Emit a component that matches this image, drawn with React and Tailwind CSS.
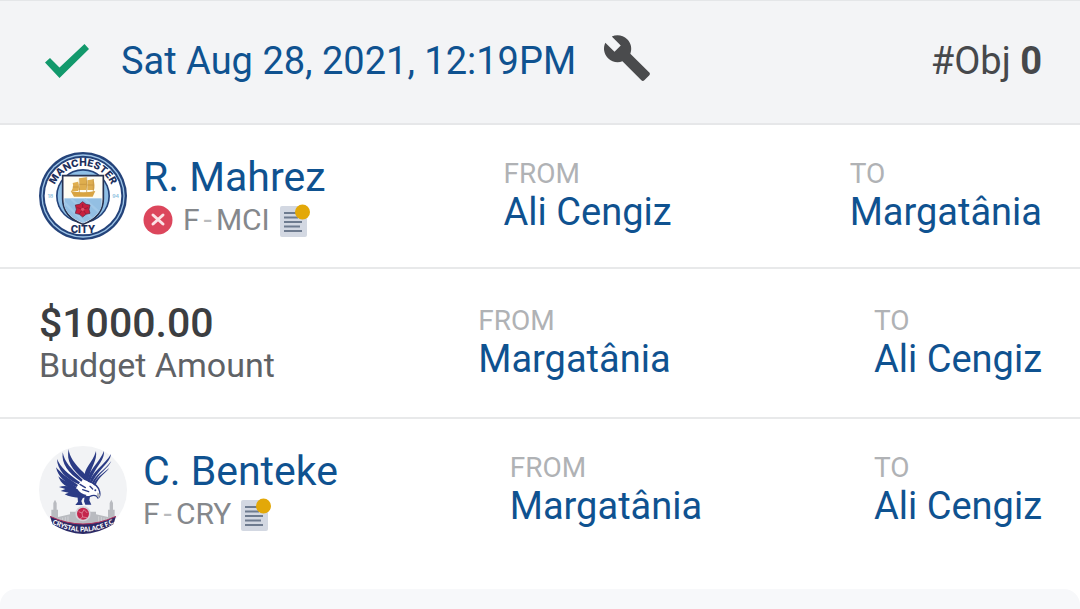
import React from 'react';
import { MdBuild } from 'react-icons/md';

const CityCrest = () => (
  <svg viewBox="27 35 264 264" className="w-[88px] h-[88px] shrink-0" role="img" aria-label="Manchester City">
    <defs>
      <path id="cityTop" d="M68 168a91 91 0 0 1 182 0" />
      <clipPath id="cityShield">
        <path d="M100 108h118v68c0 36-22 58-59 72c-37-14-59-36-59-72z" />
      </clipPath>
    </defs>
    <circle cx="159" cy="167" r="132" fill="#24437a" />
    <circle cx="159" cy="167" r="125" fill="#9ec5e8" />
    <circle cx="159" cy="167" r="121" fill="#24437a" />
    <circle cx="159" cy="167" r="115" fill="#fff" />
    <circle cx="159" cy="167" r="81" fill="#24437a" />
    <circle cx="159" cy="167" r="76" fill="#8fbfe6" />
    <path d="M98 106h122v70c0 38-24 62-61 76c-37-14-61-38-61-76z" fill="#fff" stroke="#28324f" strokeWidth="5" />
    <g clipPath="url(#cityShield)">
      <rect x="103" y="111" width="112" height="63" fill="#fffdf2" />
      <rect x="103" y="174" width="112" height="80" fill="#93bfe3" />
      <path d="M103 186l60 60M124 176l70 66M164 176l44 40" stroke="#a0c8e8" strokeWidth="7" />
    </g>
    <path d="M122 152q38 8 74 0l-8 17h-56z" fill="#d9a441" />
    <path d="M128 128l16-4q6 16 0 28h-20q8-12 4-24zM148 114l20-3q6 20 0 38h-22q7-16 2-35zM172 120l18-3q6 18 2 32h-20z" fill="#dfae4e" />
    <path d="M148 114v42M170 110v46M190 116v38M148 132h20M172 134h18M128 140h16" stroke="#c08f3c" strokeWidth="2" />
    <path d="M158 184l10 8 12 2-3 13 3 12-12 3-10 8-10-8-12-3 3-12-3-13 12-2z" fill="#c8203f" stroke="#5b2340" strokeWidth="2" />
    <path d="M158 207v-16M158 207l16-5M158 207l10 14M158 207l-10 14M158 207l-16-5" stroke="#7a1c38" strokeWidth="2" />
    <circle cx="158" cy="207" r="5" fill="#e2556c" />
    <text fontFamily="Inter, sans-serif" fontWeight="800" fontSize="30" fill="#1d2f5c" textAnchor="middle">
      <textPath href="#cityTop" startOffset="50%">MANCHESTER</textPath>
    </text>
    <text x="159" y="277" fontFamily="Inter, sans-serif" fontWeight="800" fontSize="30" fill="#1d2f5c" textAnchor="middle">CITY</text>
    <text x="61" y="173" fontFamily="Inter, sans-serif" fontWeight="600" fontSize="16" fill="#8fbfe0" textAnchor="middle">18</text>
    <text x="257" y="173" fontFamily="Inter, sans-serif" fontWeight="600" fontSize="16" fill="#8fbfe0" textAnchor="middle">94</text>
  </svg>
);

const PalaceCrest = () => (
  <svg viewBox="27 33 264 264" className="w-[88px] h-[88px] shrink-0" role="img" aria-label="Crystal Palace">
    <defs>
      <path id="palaceRibbon" d="M62 263Q159 317 256 263" />
    </defs>
    <circle cx="159" cy="165" r="132" fill="#f2f3f5" />
    {/* palace */}
    <path d="M70 204l5-10 5 10v50H70zM239 204l5-10 5 10v50h-10zM64 224h20v36H64zM234 224h20v36h-20zM84 246l36-8v-8h78v8l36 8v20H84z" fill="#b9bbc0" />
    <path d="M90 250v10M98 248v14M106 246v16M114 244v20M206 244v20M214 246v16M222 248v14M230 250v10" stroke="#dcdde0" strokeWidth="2" />
    {/* eagle */}
    <path d="M108 84C124 104 146 116 176 140C192 144 206 156 209 170C211 180 209 186 204 189C200 181 194 180 186 182C174 188 160 186 150 180C132 170 112 140 102 110Z" fill="#fff" />
    <path d="M116 42C118 66 134 86 160 112C168 120 172 130 176 140L162 134C126 104 108 78 116 42Z" fill="#2b3b85" />
    <path d="M98 52C104 82 122 100 158 134L154 140C114 114 94 86 98 52Z" fill="#2b3b85" />
    <path d="M81 72C92 98 112 114 150 142L146 148C106 130 82 104 81 72Z" fill="#2b3b85" />
    <path d="M78 97C92 114 112 128 144 150L140 156C106 144 84 126 78 97Z" fill="#2b3b85" />
    <path d="M85 124C98 136 116 142 140 156L136 164C110 158 92 146 85 124Z" fill="#2b3b85" />
    <path d="M87 156C104 150 124 154 142 162C148 172 158 178 170 180L162 188C142 190 118 186 104 178L116 173L92 168L106 162Z" fill="#2b3b85" />
    <path d="M198 48C202 78 184 92 174 136L164 128C160 100 188 84 198 48Z" fill="#2b3b85" />
    <path d="M222 48C224 78 196 94 180 140L173 137C174 106 208 84 222 48Z" fill="#2b3b85" />
    <path d="M243 57C240 86 206 100 186 144L179 141C186 110 224 90 243 57Z" fill="#2b3b85" />
    <path d="M244 78C234 102 208 110 191 148L186 145C194 120 224 106 244 78Z" fill="#2b3b85" />
    <path d="M238 99C226 116 208 122 196 152L190 149C198 130 214 118 238 99Z" fill="#2b3b85" />
    <path d="M174 138C192 144 206 156 209 170C211 180 209 186 204 189C200 181 194 180 186 182C178 186 170 187 160 185" fill="none" stroke="#2b3b85" strokeWidth="4" />
    <path d="M150 148l16 10M158 164l18 6M180 154l8 8" stroke="#2b3b85" strokeWidth="4" strokeLinecap="round" />
    <circle cx="196" cy="166" r="3" fill="#2b3b85" />
    <path d="M203 172l8 8-5 10-6-8z" fill="#b4b6bb" />
    <path d="M142 180l18 6-6 12 4 12h-22l8-10zM164 184h16l-2 12 6 13h-18l-4-10z" fill="#2b3b85" />
    {/* ball */}
    <circle cx="159" cy="236" r="23" fill="#d5d3da" />
    <circle cx="159" cy="236" r="18" fill="#c4264c" />
    <path d="M146 230l10 4 6-10M156 234l2 12 14 2M158 246l-8 6M162 224l10 10" fill="none" stroke="#e9a3b4" strokeWidth="2" />
    <path d="M60 244Q159 290 258 244L250 268Q159 326 68 268Z" fill="#2b2a66" />
    <path d="M60 244Q159 290 258 244" fill="none" stroke="#b0305c" strokeWidth="3" />
    <text fontFamily="Lato, sans-serif" fontWeight="900" fontSize="20" fill="#fff" textAnchor="middle">
      <textPath href="#palaceRibbon" startOffset="50%">CRYSTAL PALACE F.C</textPath>
    </text>
  </svg>
);

const CheckIcon = () => (
  <svg viewBox="0 0 44 34" className="w-11 h-[34px] shrink-0" role="img" aria-label="Completed">
    <path d="M0 18.500L5 14L14.500 23.500L39.500 0L44 5L14.500 34z" fill="#12996c" />
  </svg>
);

const OutIcon = () => (
  <svg viewBox="0 0 30 30" className="w-[30px] h-[30px] shrink-0" role="img" aria-label="Out">
    <circle cx="15" cy="15" r="14.500" fill="#dc465c" />
    <path d="M10 10l10 9M20 10l-10 9" stroke="#fbe3e6" strokeWidth="3" strokeLinecap="round" />
  </svg>
);

const NoteIcon = () => (
  <svg viewBox="0 0 30 33" className="w-[30px] h-[33px] shrink-0" aria-hidden="true">
    <rect x="0" y="2" width="27" height="31" rx="2" fill="#d3d8e2" />
    <path d="M4 9h13M4 13.500h14M4 18h18M4 22.500h16M4 27h18" stroke="#6e7b8f" strokeWidth="2" />
    <circle cx="22.500" cy="8" r="7.500" fill="#e3a808" />
  </svg>
);

const Team = ({ label, name }) => (
  <div>
    <div className="text-[28px] leading-8 text-[#b0b2b5]">{label}</div>
    <a href="#" className="block text-[38px] leading-11 text-[#0f5290]">{name}</a>
  </div>
);

const Player = ({ crest, name, position, club, out }) => (
  <div className="flex items-center gap-4">
    {crest}
    <div>
      <a href="#" className="block text-[41px] leading-12 text-[#0f5290]">{name}</a>
      <div className="flex items-center text-[30px] leading-[38px] text-[#85888c]">
        {out && <span className="mr-[10px]"><OutIcon /></span>}
        <span>{position}</span>
        <span className="mx-1 text-[#b9bbbe]">-</span>
        <span className="mr-[10px]">{club}</span>
        <button type="button" aria-label="Player note"><NoteIcon /></button>
      </div>
    </div>
  </div>
);

const Budget = ({ amount }) => (
  <div>
    <div className="text-[41px] leading-11 font-medium text-[#3c3e41]">{amount}</div>
    <div className="text-[34px] leading-10 text-[#5f6266]">Budget Amount</div>
  </div>
);

const rows = [
  {
    item: <Player crest={<CityCrest />} name="R. Mahrez" position="F" club="MCI" out />,
    from: 'Ali Cengiz',
    to: 'Margatânia'
  },
  {
    item: <Budget amount="$1000.00" />,
    from: 'Margatânia',
    to: 'Ali Cengiz'
  },
  {
    item: <Player crest={<PalaceCrest />} name="C. Benteke" position="F" club="CRY" />,
    from: 'Margatânia',
    to: 'Ali Cengiz'
  },
];

const App = () => {
  return (
    <main className="min-h-screen overflow-hidden bg-white font-['Roboto',sans-serif]">
      <header className="flex items-center justify-between border-t border-b-2 border-t-[#e4e6e8] border-b-[#e6e7e9] bg-[#f3f4f6] pl-[39px] pr-[38px] pt-8 pb-[34px] text-[38px] leading-14">
        <div className="flex items-center">
          <span className="ml-[6px] mr-8"><CheckIcon /></span>
          <a href="#" className="text-[#0f5290]">Sat Aug 28, 2021, 12:19PM</a>
          <button type="button" aria-label="Trade settings" className="ml-[26px] pb-[6px]"><MdBuild className="text-[50px] text-[#4a4b4d]" /></button>
        </div>
        <div className="text-[#46484b]">#Obj <b className="font-bold">0</b></div>
      </header>

      <ul>
        {rows.map((row, index) => (
          <li key={index} className={`flex items-center justify-between border-b-2 border-[#e8e9ea] pl-[39px] pr-[38px] last:border-b-0 ${index === 1 ? 'py-8' : 'py-[27px]'}`}>
            {row.item}
            <Team label="FROM" name={row.from} />
            <Team label="TO" name={row.to} />
          </li>
        ))}
      </ul>

      <div className="mt-7 h-10 rounded-t-2xl bg-[#f7f8fa]"></div>
    </main>
  );
};

export default App;
